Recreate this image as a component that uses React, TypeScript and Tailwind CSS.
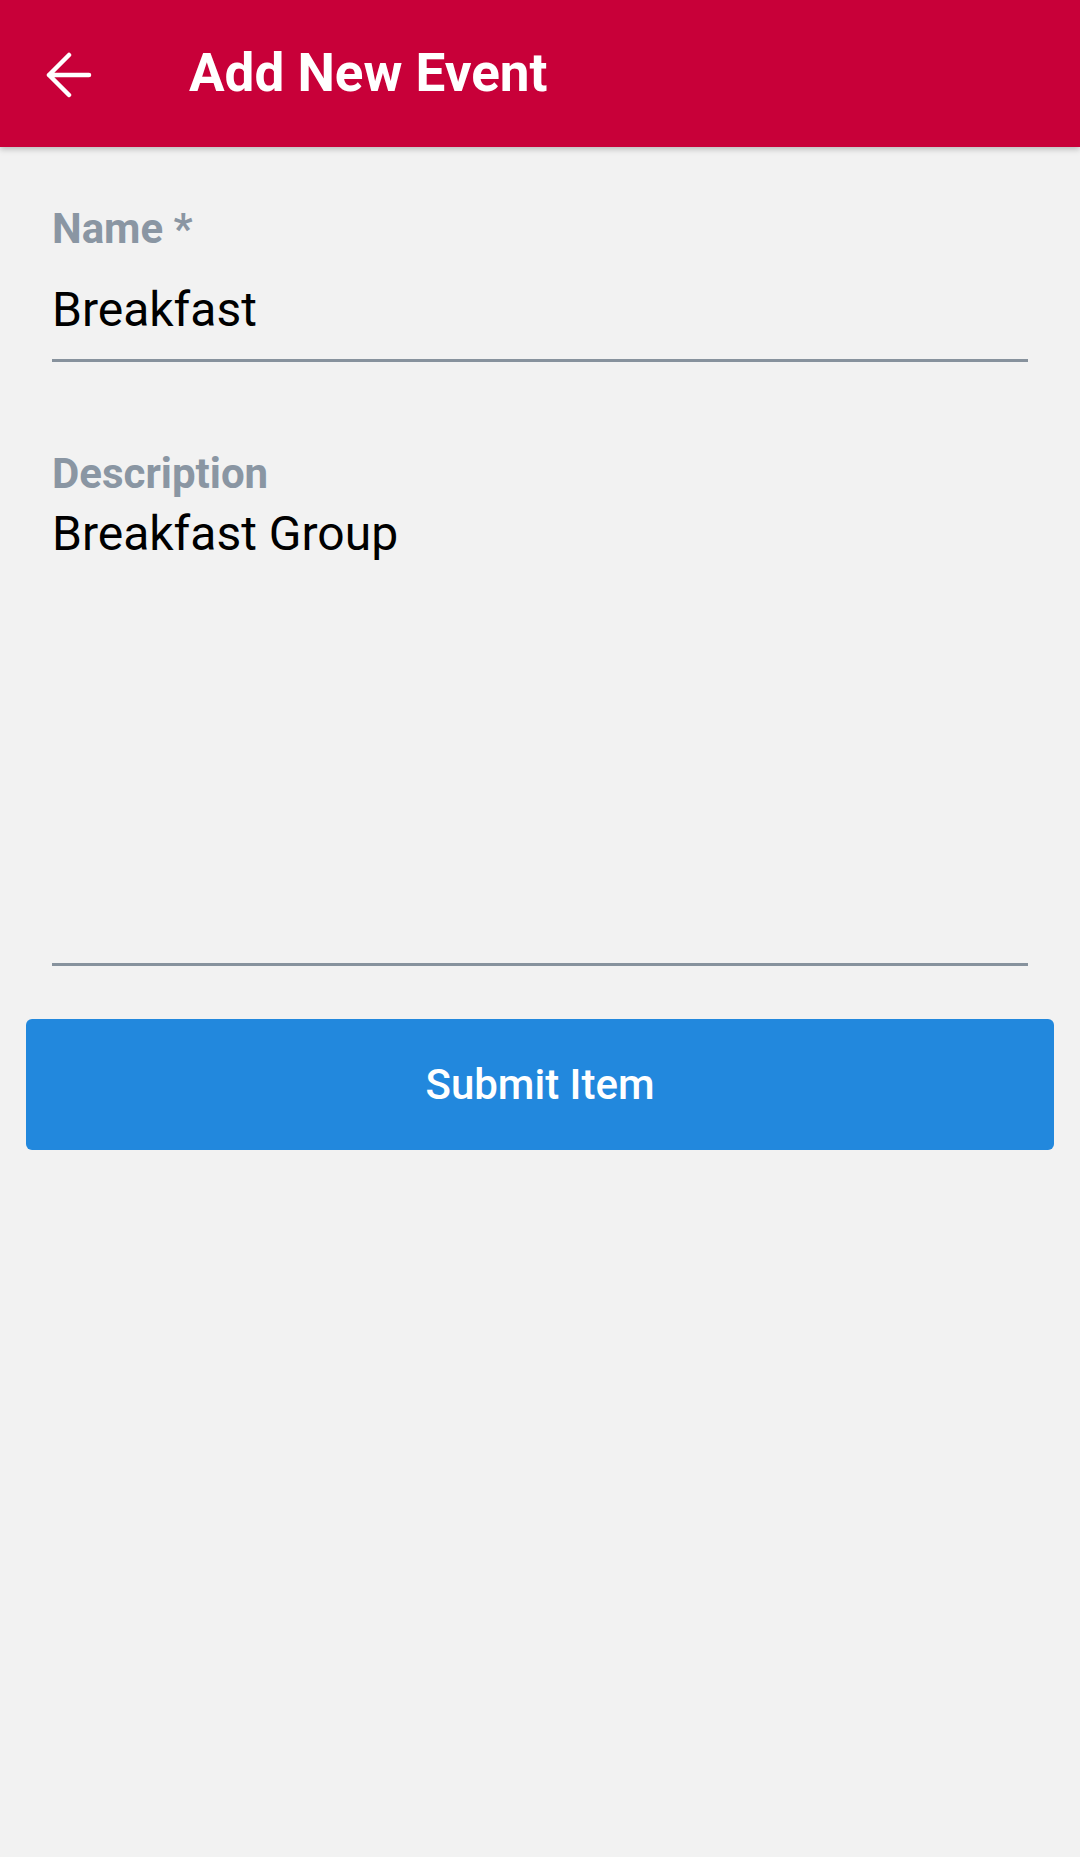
export default function App() {
  return (
    <div className="min-h-[1857px] w-full bg-[#f2f2f2] font-['Roboto',sans-serif]">
      {/* App bar */}
      <header className="relative z-10 flex h-[147px] items-center bg-[#c80039] shadow-[0_2px_6px_rgba(0,0,0,0.25)]">
        <button className="ml-[45px] flex h-[48px] w-[48px] items-center justify-center text-white">
          <svg width="48" height="48" viewBox="0 0 48 48" fill="none" stroke="currentColor" strokeWidth="4.5" strokeLinecap="round" strokeLinejoin="round">
            <path d="M44 25H4M24 5L4 25l20 20" />
          </svg>
        </button>
        <h1 className="ml-[96px] text-[53px] font-bold leading-none text-white">Add New Event</h1>
      </header>

      <main>
        <div className="px-[52px] pt-[57px]">
          {/* Name */}
          <label className="block text-[42px] font-bold leading-[50px] text-[#8a96a3]">Name *</label>
          <div className="mt-[28px] border-b-[3px] border-[#87929d] pb-[21px] text-[48px] leading-[56px] text-black">
            Breakfast
          </div>

          {/* Description */}
          <label className="mt-[87px] block text-[42px] font-bold leading-[50px] text-[#8a96a3]">Description</label>
          <div className="mt-[7px] h-[460px] border-b-[3px] border-[#87929d] text-[48px] leading-[56px] text-black">
            Breakfast Group
          </div>
        </div>

        <div className="px-[26px] pt-[53px]">
          <button className="flex h-[131px] w-full items-center justify-center rounded-[6px] bg-[#2288dd] text-[42px] font-medium text-white">
            Submit Item
          </button>
        </div>
      </main>
    </div>
  );
}
